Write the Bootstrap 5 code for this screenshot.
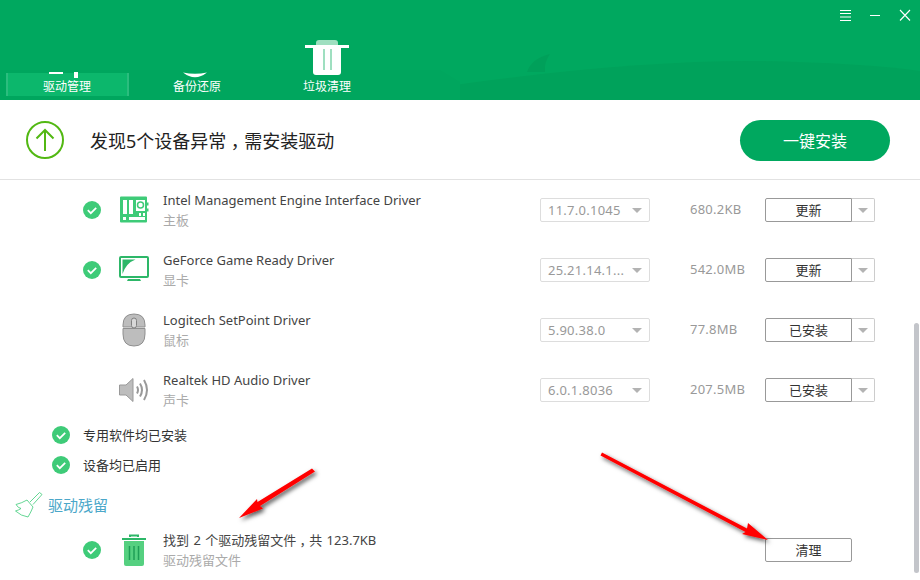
<!DOCTYPE html>
<html lang="zh-CN">
<head>
<meta charset="utf-8">
<title>驱动管理</title>
<link href="https://cdn.jsdelivr.net/npm/bootstrap@5.3.0/dist/css/bootstrap.min.css" rel="stylesheet">
<style>
html,body{height:100%;overflow:hidden;background:#fff}
body{font-family:"Noto Sans","Noto Sans CJK SC",sans-serif;font-size:13px;color:#333}
.app-win{width:920px;height:580px;position:relative;overflow:hidden}
.top-hdr{height:100px;background:#00a85f;position:relative;overflow:hidden}
.hdr-bg{position:absolute;left:0;top:0}
.win-ctl{position:absolute;top:0;right:0;display:flex;align-items:center;height:30px}
.win-ctl svg{display:block}
.tab-row{position:absolute;left:2px;top:0;height:100px;display:flex}
.tab-item{width:130px;height:100px;position:relative;color:#fff;font-size:12px;line-height:16px;text-align:center;padding-top:79px}
.tab-item svg{position:absolute;left:0;top:0}
.tab-on{position:absolute;left:4px;top:73px;width:123px;height:23px;background:#0cb76c;border-left:2px solid #2bbd7e;border-right:2px solid #2bbd7e}
.tab-txt{position:relative}
.banner{height:80px;border-bottom:1px solid #e2e2e2;padding:0 30px 0 25px}
.banner h1{font-size:18px;font-weight:400;color:#222;margin:2px 0 0 25px;line-height:24px;flex:1}
.pn{font-feature-settings:"halt";padding:0 .25em}
.inst-btn{width:150px;height:41px;border-radius:21px;background:#00a85f;color:#fff;font-size:16px;border:0;padding:2px 0 0;margin-top:1px}
.inst-btn:hover{background:#00a85f;color:#fff}
.drv-list{position:relative;height:400px}
.drv-row{height:60px;padding-left:83px;padding-right:45px}
.chk{width:18px;height:18px;flex:none}
.ico-box{width:36px;height:36px;margin-left:15px;flex:none;display:flex;align-items:center;justify-content:center}
.drv-info{width:377px;margin-left:11px;flex:none}
.drv-name{font-size:13px;line-height:20px;color:#444}
.drv-wide{word-spacing:1px}
.drv-sub{font-size:13px;line-height:20px;color:#aaa}
.ver-pick{width:110px;height:24px;border:1px solid #ddd;border-radius:2px;color:#999;padding:0 7px;flex:none;line-height:22px;font-size:13px;letter-spacing:.25px}
.caret{width:0;height:0;border-left:5px solid transparent;border-right:5px solid transparent;border-top:5px solid #b3b3b3;flex:none}
.drv-size{width:75px;margin-left:40px;color:#999;flex:none;font-size:13px;letter-spacing:.25px}
.act-main{width:87px;height:24px;border:1px solid #999;border-radius:2px 0 0 2px;background:#fff;color:#333;font-size:13px;padding:0 0 1px;line-height:20px}
.act-solo{border-radius:2px}
.act-more{width:23px;height:24px;border:1px solid #ccc;border-left:0;border-radius:0 2px 2px 0;background:#fff;padding:0}
.stat-row{height:30px;padding-left:52px}
.stat-row span{margin-left:13px;color:#333;padding-top:2px}
.sect-h{height:40px;padding:10px 0 0 14px;color:#4ba7c9;font-size:15px}
.sect-h span{margin-left:4px}
.last-gap{width:225px;flex:none}
.sbar{position:absolute;left:914px;top:143px;width:5px;height:250px;background:#c3c5ca;border-radius:3px}
.arrows{position:absolute;left:0;top:0;pointer-events:none}
</style>
</head>
<body>
<div class="app-win d-flex flex-column">
  <header class="top-hdr flex-shrink-0">
    <svg class="hdr-bg" width="920" height="100" viewBox="0 0 920 100">
      <path d="M380 100 L420 90 Q620 60 760 61 Q860 63 920 71 V100Z" fill="#00a25b"/>
      <path d="M0 70 H440 L460 82 V100 H0Z" fill="#00a65e"/>
      <path d="M527 72 Q532 58 550 54 Q544 62 545 72Z" fill="#00a05a"/>
    </svg>
    <div class="tab-row">
      <div class="tab-item">
        <div class="tab-on"></div>
        <svg width="130" height="100" viewBox="0 0 130 100"><path d="M47 72h14v2H47zM72 72h4v2h-4zM72 74h4v4h-4z" fill="#fff"/></svg>
        <span class="tab-txt">驱动管理</span>
      </div>
      <div class="tab-item">
        <svg width="130" height="100" viewBox="0 0 130 100"><path d="M51 72.500Q63 82 75 72.500Q63 75 51 72.500Z" fill="#fff"/></svg>
        <span class="tab-txt">备份还原</span>
      </div>
      <div class="tab-item">
        <svg width="130" height="100" viewBox="0 0 130 100">
          <path d="M54 45v-2q0-3 3-3h16q3 0 3 3v2z" fill="#9fdfc0"/>
          <path d="M43 45h44v3H43z" fill="#fff"/>
          <path d="M51 48h28v24q0 3-3 3H54q-3 0-3-3z" fill="#fff"/>
          <path d="M61 49h2v21h-2zM68 49h2v21h-2z" fill="#9fdfc0"/>
        </svg>
        <span class="tab-txt">垃圾清理</span>
      </div>
    </div>
    <div class="win-ctl">
      <svg width="30" height="30" viewBox="0 0 30 30"><path d="M10 10.500h11M10 13.500h11M10 17h11M10 20.500h11" stroke="#fff" stroke-width="1" fill="none"/></svg>
      <svg width="30" height="30" viewBox="0 0 30 30"><path d="M10 15.500h10" stroke="#fff" stroke-width="1"/></svg>
      <svg width="30" height="30" viewBox="0 0 30 30"><path d="M10 10l10 10.500M20 10L10 20.500" stroke="#fff" stroke-width="1.100"/></svg>
    </div>
  </header>

  <section class="banner d-flex align-items-center flex-shrink-0">
    <svg width="40" height="40" viewBox="0 0 40 40" class="flex-shrink-0"><circle cx="20" cy="20" r="18" fill="none" stroke="#52b813" stroke-width="2"/><path d="M20 31V10M11.500 18.500L20 10l8.500 8.500" fill="none" stroke="#52b813" stroke-width="2"/></svg>
    <h1>发现5个设备异常<span class="pn">，</span>需安装驱动</h1>
    <button class="btn inst-btn" type="button">一键安装</button>
  </section>

  <main class="drv-list">
    <svg width="0" height="0" class="position-absolute"><defs>
      <symbol id="okc" viewBox="0 0 18 18"><circle cx="9" cy="9" r="9" fill="#3ecb78"/><path d="M4.800 9.200l3 3 5.400-5.400" fill="none" stroke="#fff" stroke-width="1.700"/></symbol>
    </defs></svg>

    <div class="drv-row d-flex align-items-center">
      <svg class="chk"><use href="#okc"/></svg>
      <div class="ico-box"><svg width="30" height="28" viewBox="0 0 30 28">
        <path d="M1 1.500q0-1 1-1h25q1 0 1 1v5h1.500v3H28v3h1.500v3H28v10q0 1-1 1H2q-1 0-1-1z" fill="#3ecb78"/>
        <path d="M4 4h4v14H4zM10 4h4v14h-4zM4 21h3v3H4zM10 21h16v3H10zM20 17h2v3h-2zM24 17h2v3h-2z" fill="#fff"/>
        <rect x="17" y="4" width="9" height="11" fill="#fff"/><circle cx="21.500" cy="9" r="3" fill="none" stroke="#3ecb78" stroke-width="1.500"/>
      </svg></div>
      <div class="drv-info"><div class="drv-name">Intel Management Engine Interface Driver</div><div class="drv-sub">主板</div></div>
      <div class="ver-pick d-flex align-items-center justify-content-between"><span>11.7.0.1045</span><i class="caret"></i></div>
      <div class="drv-size">680.2KB</div>
      <div class="d-flex"><button class="btn act-main" type="button">更新</button><button class="btn act-more d-flex align-items-center justify-content-center" type="button"><i class="caret"></i></button></div>
    </div>

    <div class="drv-row d-flex align-items-center">
      <svg class="chk"><use href="#okc"/></svg>
      <div class="ico-box"><svg width="30" height="28" viewBox="0 0 30 28">
        <rect x="1" y="1" width="28" height="20" rx="1" fill="#fff" stroke="#2db768" stroke-width="2"/>
        <path d="M3.500 3.500h13Q7 7 3.500 18z" fill="#2db768"/>
        <path d="M9 23h12l1 2H8z" fill="#2db768"/>
      </svg></div>
      <div class="drv-info"><div class="drv-name">GeForce Game Ready Driver</div><div class="drv-sub">显卡</div></div>
      <div class="ver-pick d-flex align-items-center justify-content-between"><span>25.21.14.1...</span><i class="caret"></i></div>
      <div class="drv-size">542.0MB</div>
      <div class="d-flex"><button class="btn act-main" type="button">更新</button><button class="btn act-more d-flex align-items-center justify-content-center" type="button"><i class="caret"></i></button></div>
    </div>

    <div class="drv-row d-flex align-items-center">
      <span class="chk"></span>
      <div class="ico-box"><svg width="26" height="34" viewBox="0 0 26 34">
        <path d="M2 14V12Q2 1 13 1T24 12v2z" fill="#bdbdbd" stroke="#8f8f8f"/>
        <path d="M2 15.500h22V21Q24 33 13 33T2 21z" fill="#bdbdbd" stroke="#8f8f8f"/>
        <rect x="10.500" y="5" width="5" height="10" rx="2.500" fill="#d8d8d8" stroke="#808080"/>
      </svg></div>
      <div class="drv-info"><div class="drv-name">Logitech SetPoint Driver</div><div class="drv-sub">鼠标</div></div>
      <div class="ver-pick d-flex align-items-center justify-content-between"><span>5.90.38.0</span><i class="caret"></i></div>
      <div class="drv-size">77.8MB</div>
      <div class="d-flex"><button class="btn act-main" type="button">已安装</button><button class="btn act-more d-flex align-items-center justify-content-center" type="button"><i class="caret"></i></button></div>
    </div>

    <div class="drv-row d-flex align-items-center">
      <span class="chk"></span>
      <div class="ico-box"><svg width="30" height="26" viewBox="0 0 30 26">
        <path d="M.500 8H7L14 1.500v23L7 18H.500z" fill="#bdbdbd" stroke="#999"/>
        <path d="M18 9.500q2 3.500 0 7M21 6.500q4 6.500 0 13M25 3q6 10 0 20" fill="none" stroke="#999" stroke-width="2"/>
      </svg></div>
      <div class="drv-info"><div class="drv-name">Realtek HD Audio Driver</div><div class="drv-sub">声卡</div></div>
      <div class="ver-pick d-flex align-items-center justify-content-between"><span>6.0.1.8036</span><i class="caret"></i></div>
      <div class="drv-size">207.5MB</div>
      <div class="d-flex"><button class="btn act-main" type="button">已安装</button><button class="btn act-more d-flex align-items-center justify-content-center" type="button"><i class="caret"></i></button></div>
    </div>

    <div class="stat-row d-flex align-items-center"><svg class="chk"><use href="#okc"/></svg><span>专用软件均已安装</span></div>
    <div class="stat-row d-flex align-items-center"><svg class="chk"><use href="#okc"/></svg><span>设备均已启用</span></div>

    <div class="sect-h d-flex align-items-center">
      <svg width="30" height="28" viewBox="0 0 30 28" class="flex-shrink-0"><path d="M2 13.500Q8 12 13 9l6 7q-2 5-5 10Q7 25 1.500 20 5 19 7 17.500 4 17 2 13.500z" fill="#fff" stroke="#3ecb78" stroke-width=".8"/><path d="M16 11L25.500 1.500l2.500 2L19 13.500" fill="#fff" stroke="#3ecb78" stroke-width=".8"/></svg>
      <span>驱动残留</span>
    </div>

    <div class="drv-row d-flex align-items-center">
      <svg class="chk"><use href="#okc"/></svg>
      <div class="ico-box"><svg width="26" height="32" viewBox="0 0 26 32">
        <path d="M9 3V1.500h8V3" fill="none" stroke="#2db768" stroke-width="2"/>
        <path d="M1 4h24v2H1z" fill="#2db768"/>
        <path d="M3 7h20v23q0 2-2 2H5q-2 0-2-2z" fill="#55d080"/>
        <path d="M8.500 12v14M13 12v14M17.500 12v14" stroke="#1f9e56" stroke-width="1.500"/>
      </svg></div>
      <div class="drv-info"><div class="drv-name drv-wide">找到 2 个驱动残留文件<span class="pn">，</span>共 123.7KB</div><div class="drv-sub">驱动残留文件</div></div>
      <span class="last-gap"></span>
      <button class="btn act-main act-solo" type="button">清理</button>
    </div>

    <div class="sbar"></div>
  </main>

  <svg class="arrows" width="920" height="580" viewBox="0 0 920 580">
    <defs><filter id="sh" x="-10%" y="-10%" width="130%" height="130%"><feDropShadow dx="2" dy="2.500" stdDeviation="2" flood-color="#000" flood-opacity=".65"/></filter></defs>
    <g filter="url(#sh)" fill="#f00">
      <path d="M312 468.500L315 471.500L260 506L263 508.500L239 518L257 499L257.500 502Z"/>
      <path d="M602 452.500L747 528.500L748 523L768 540L742 534L745.500 532L600.500 455.500Z"/>
    </g>
  </svg>
</div>
<script src="https://cdn.jsdelivr.net/npm/bootstrap@5.3.0/dist/js/bootstrap.bundle.min.js"></script>
</body>
</html>
